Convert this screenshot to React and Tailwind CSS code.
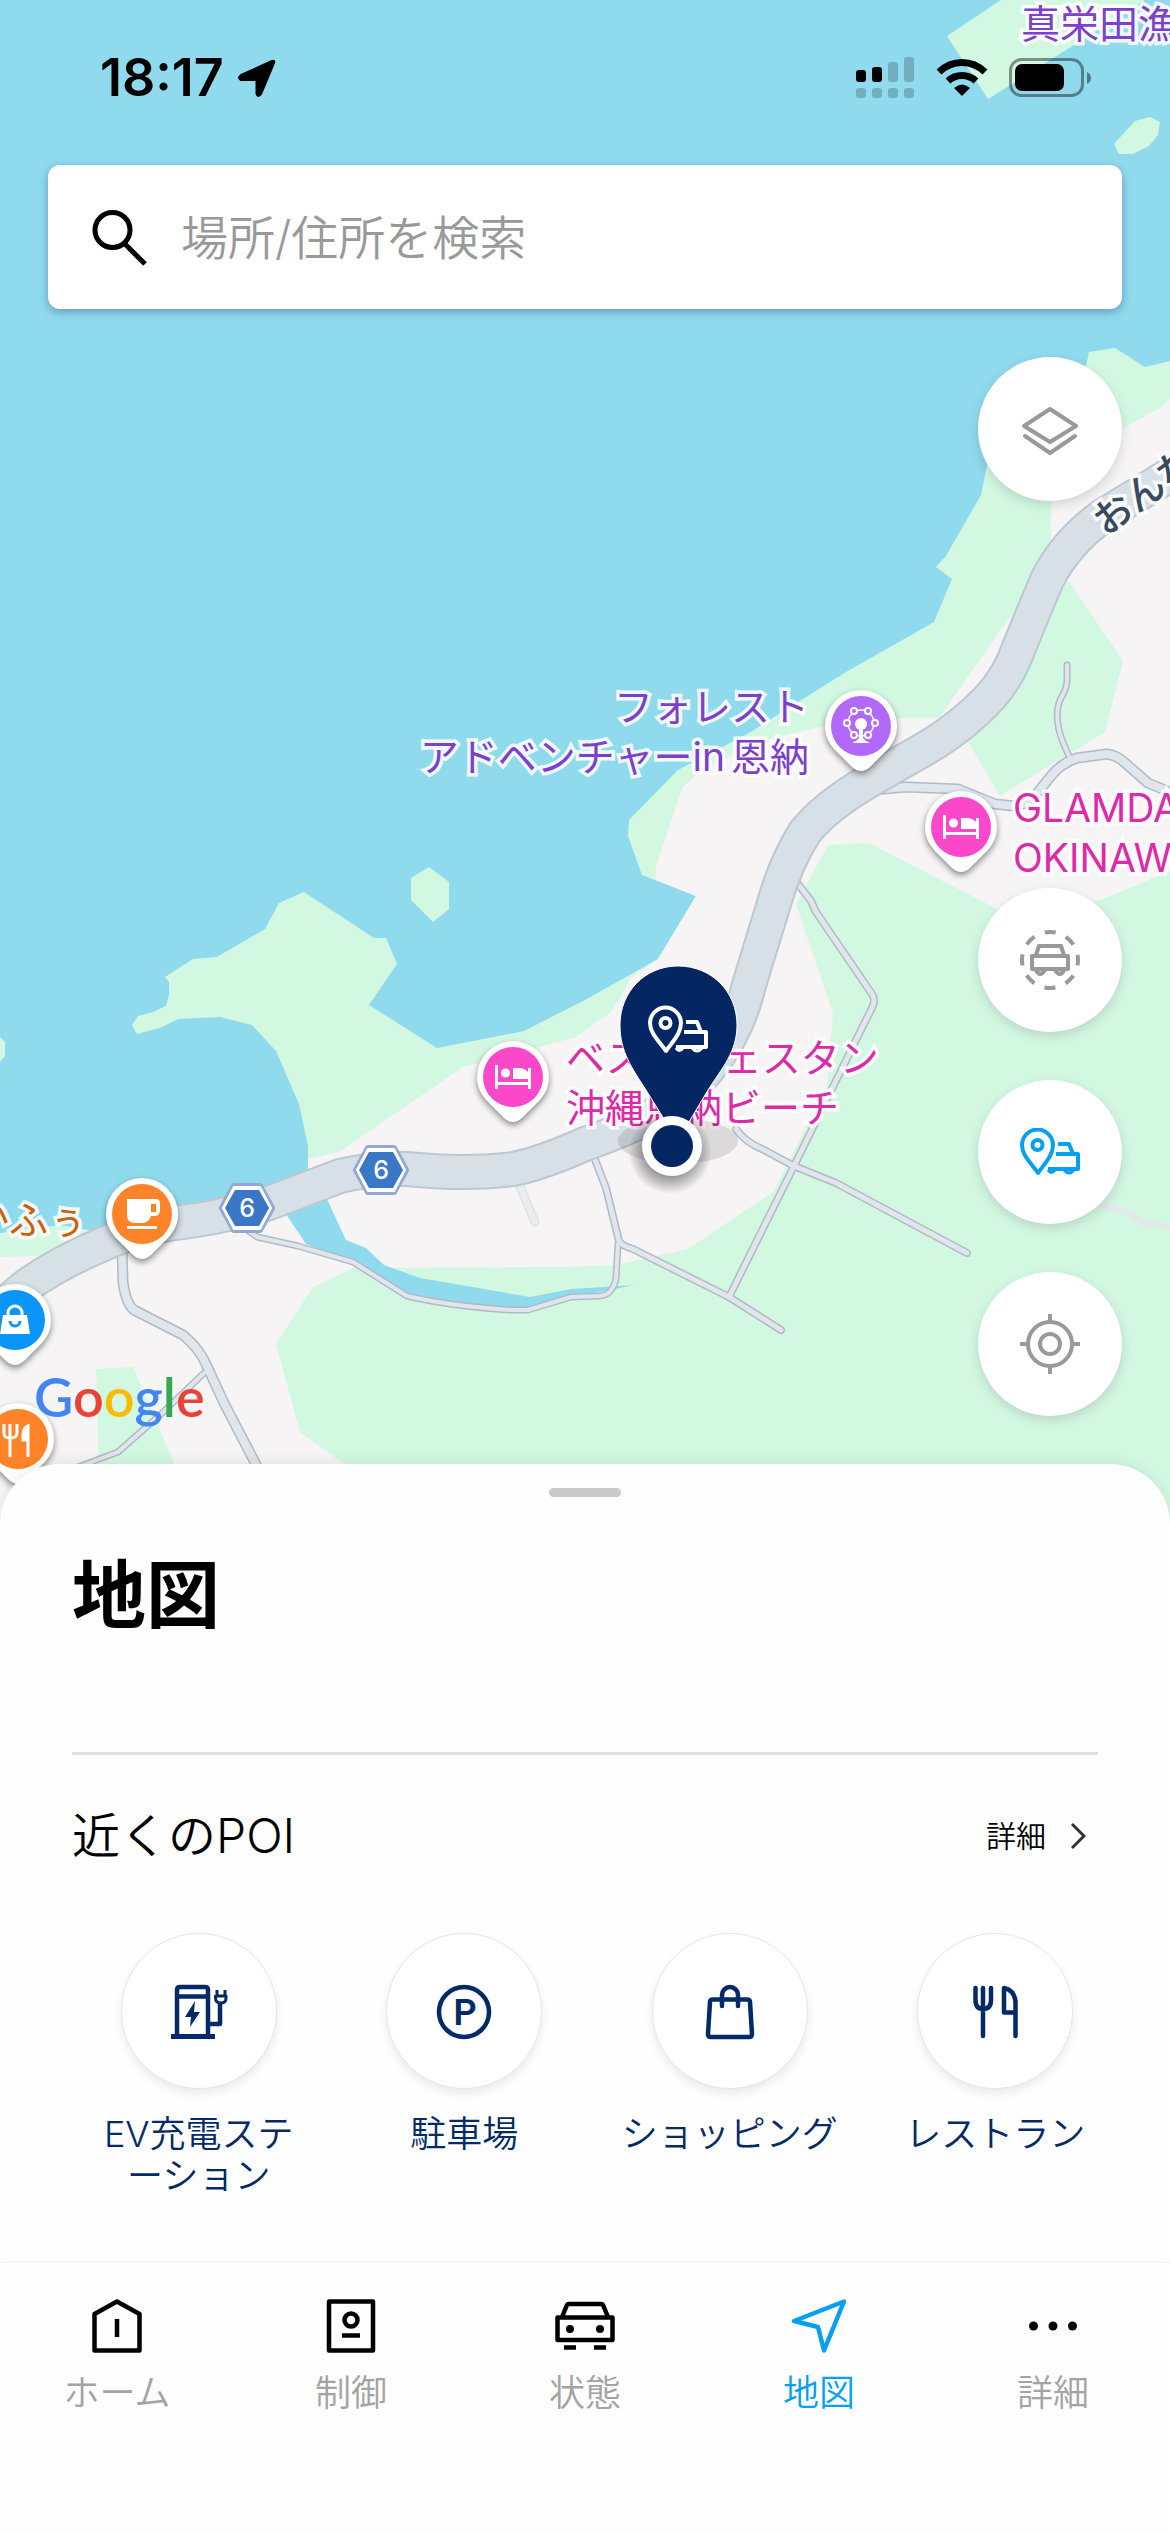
import React from "react";

const NAVY = "#012a66";

/* ---------- map drawing ---------- */

const MAIN_ROAD =
  "M1200 455 L1170 475 L1104 515 Q1066 542 1047 580 Q1030 620 1014 660 Q1002 688 975 712 Q950 735 921 751 L869 781 Q826 806 805 832 Q786 862 775 900 L749 985 Q742 1014 730 1036 Q705 1085 650 1117 Q620 1132 585 1144 Q540 1164 513 1169 Q466 1175 407 1169 Q372 1168 340 1176 L269 1203 Q220 1218 175 1223 Q140 1228 108 1242 Q60 1262 26 1286 L-20 1325";

const SIDE_ROADS = [
  { w: 11, d: "M872 790 L906 787 L958 789 L995 804 L1014 806 Q1030 804 1038 792 L1051 776 Q1060 764 1077 758 L1107 754 Q1116 755 1124 762 L1148 783 L1172 793" },
  { w: 7, d: "M1067 665 V682 Q1066 690 1060 700 Q1055 712 1059 730 Q1062 742 1071 760" },
  { w: 8, d: "M798 884 L811 901 L816 912 L872 994 Q876 1000 872 1008 L859 1034 L794 1166 L729 1297" },
  { w: 8, d: "M736 1129 Q745 1142 762 1149 L794 1166 L836 1183 L967 1253" },
  { w: 8, d: "M594 1157 L606 1188 L619 1241 Q622 1246 633 1249 L729 1297 L781 1330" },
  { w: 7, d: "M618 1244 L616 1279 Q612 1295 600 1296 L571 1297 L528 1310 H511 Q450 1306 407 1296 L353 1262 L298 1246 L257 1237 L243 1227" },
  { w: 11, d: "M122 1248 L123 1282 Q126 1304 134 1310 L183 1335 Q199 1348 206 1364 L224 1403 L262 1476" },
  { w: 7, d: "M204 1373 L160 1415 L118 1452 L70 1470" },
];

function MapDrawing() {
  return (
    <svg className="absolute left-0 top-0" width="1170" height="1560" viewBox="0 0 1170 1560" aria-hidden="true">
      <rect width="1170" height="1560" fill="#90daee" />
      {/* coastal green */}
      <path
        fill="#d3f8e2"
        d="M1170 361 L1145 367 L1115 348 L1089 352 L1086 366 L1010 430 L987 465 L981 495 L946 556 L936 567 L952 579 L934 622 L846 672 L749 733 L678 770 L629 820 L628 836 L642 875 L696 896 L658 959 L585 1000 L524 1031 L437 1048 L369 1005 L397 964 L386 938 H374 L304 892 L279 903 L265 929 L217 957 L193 959 L165 977 L169 982 V995 L166 1006 L153 1012 L138 1016 L132 1025 L137 1034 L160 1028 L178 1019 L220 1017 L252 1025 L276 1051 L299 1104 L308 1146 V1200 L100 1232 L60 1225 L0 1233 V1560 H1170 Z"
      />
      {/* built-up land */}
      <path
        fill="#f6f4f5"
        d="M1170 399 L1160 408 L1126 427 L1052 480 L1050 560 L939 718 H902 L824 726 L753 743 L697 774 L682 788 L656 867 V880 L696 896 L658 959 L630 978 L624 992 L611 1012 L576 1037 L481 1063 L463 1067 L339 1152 L308 1159 V1205 L108 1244 L37 1256 L0 1257 V1560 H1170 Z"
      />
      <path fill="#d3f8e2" d="M1068 580 L1123 661 L1105 732 L1000 796 L967 740 L1020 660 Z" />
      <path
        fill="#d3f8e2"
        d="M828 845 L869 843 L997 909 L1098 901 L1170 871 V1560 H420 L343 1463 L300 1432 L276 1344 L313 1287 L353 1268 L556 1267 L615 1265 L688 1249 L773 1192 L827 1085 L833 1014 L796 904 Z"
      />
      <path fill="#d3f8e2" d="M96 1369 L133 1367 L174 1463 L180 1480 H99 Z" />
      {/* islands */}
      <path fill="#d3f8e2" d="M411 878 L429 867 L449 882 V909 L433 922 L411 900 Z" />
      <path fill="#d3f8e2" d="M0 1037 L5 1042 V1056 L0 1062 Z" />
      <path fill="#d3f8e2" d="M947 36 L1001 0 H1145 L1074 45 L988 99 Z" />
      <path fill="#d3f8e2" d="M1114 144 L1135 121 L1150 117 L1160 122 L1158 135 L1149 146 L1133 154 H1119 Z" />
      {/* river */}
      <path
        fill="#90daee"
        d="M280 1205 L325 1195 L346 1240 L366 1248 L384 1265 L420 1278 L530 1297 L571 1289 L634 1285 L600 1292 L530 1309 H470 L405 1295 L351 1262 L306 1244 Z"
      />
      {/* small tracks */}
      <path d="M519 1184 L535 1222" stroke="#dfe2e4" strokeWidth="9" strokeLinecap="round" />
      <path d="M519 1184 L535 1222" stroke="#eaecee" strokeWidth="6" strokeLinecap="round" />
      <path d="M1100 1206 L1128 1212 L1145 1224 L1156 1223 L1172 1229" stroke="#e4e8e8" strokeWidth="6" fill="none" />
      {/* roads: casing first, then surface */}
      {SIDE_ROADS.map((r) => (
        <path key={r.d} d={r.d} fill="none" stroke="#b1bac4" strokeWidth={r.w} strokeLinecap="round" strokeLinejoin="round" />
      ))}
      {SIDE_ROADS.map((r) => (
        <path key={r.d} d={r.d} fill="none" stroke="#e0e6ec" strokeWidth={r.w - 3} strokeLinecap="round" strokeLinejoin="round" />
      ))}
      <path d={MAIN_ROAD} fill="none" stroke="#bcc8d0" strokeWidth="36" />
      <path d={MAIN_ROAD} fill="none" stroke="#d8e0e7" strokeWidth="32" />
      <RoadShield x={247} y={1208} />
      <RoadShield x={381} y={1170} />
    </svg>
  );
}

function RoadShield({ x, y }) {
  return (
    <g transform={`translate(${x} ${y})`}>
      <path d="M-13 -22 H13 L25 0 L13 22 H-13 L-25 0 Z" fill="#93a8d2" stroke="#93a8d2" strokeWidth="6" strokeLinejoin="round" />
      <path d="M-13 -21 H13 L24 0 L13 21 H-13 L-24 0 Z" fill="#fff" stroke="#fff" strokeWidth="2" strokeLinejoin="round" />
      <path d="M-12 -18 H12 L22 0 L12 18 H-12 L-22 0 Z" fill="#3a78c7" />
      <text y="9" textAnchor="middle" fill="#fff" className="font-['Inter'] text-[25px] font-medium">6</text>
    </g>
  );
}

const PIN_GLYPHS = {
  bed: (
    <g fill="#fff">
      <path d="M-18 -12 h3 V5 H15 V-9 h3 V12 h-3 V8 H-15 V12 h-3 Z" />
      <circle cx="-7.500" cy="-4" r="4.500" />
      <path d="M0 -9 H7 Q14 -8 16 -3 V2 H0 Z" />
    </g>
  ),
  cup: (
    <g fill="#fff">
      <path fillRule="evenodd" d="M-15 -15 H14 Q18 -15 18 -11 V-4 Q18 2 12 2 H9 Q7 9 0 9 H-7 Q-15 9 -15 1 Z M9 -10 V-2 H14 V-10 Z" />
      <rect x="-15" y="12" width="30" height="3" />
    </g>
  ),
  bag: (
    <g>
      <path d="M-12 -5 H12 L15 14 H-15 Z" fill="#fff" />
      <path d="M-7 -4 V-7 a7 7 0 0 1 14 0 V-4" fill="none" stroke="#fff" strokeWidth="3" />
      <path d="M-5 1 a5 5 0 0 0 10 0" fill="none" stroke="#0a95fb" strokeWidth="3" />
    </g>
  ),
  food: (
    <g fill="none" stroke="#fff" strokeWidth="3">
      <path d="M-14 -15 V-6 Q-14 -1 -8 -1 Q-1 -1 -1 -6 V-15 M-8 -15 V18" />
      <path d="M10 18 V-13 Q5 -11 5 -4 V1 H10" fill="#fff" />
    </g>
  ),
  wheel: (
    <g fill="none" stroke="#fff" strokeWidth="2">
      <circle r="13" cy="-3" strokeWidth="1.500" />
      <g fill="#b069fb">
        <circle cx="-7" cy="-15" r="3" />
        <circle cx="7" cy="-15" r="3" />
        <circle cx="-14" cy="-3" r="3" />
        <circle cx="14" cy="-3" r="3" />
        <circle cx="-7" cy="9" r="3" />
        <circle cx="7" cy="9" r="3" />
      </g>
      <circle cy="-2" r="6" fill="#fff" stroke="none" />
      <path d="M-2 0 H2 V12 Q4 15 8 16 V17 H-8 V16 Q-4 15 -2 12 Z" fill="#fff" stroke="none" />
    </g>
  ),
};

function Pin({ className, color, glyph }) {
  return (
    <svg className={"absolute drop-shadow-[0_3px_3px_rgba(0,0,0,0.45)] " + className} width="80" height="90" viewBox="-40 -40 80 90" aria-hidden="true">
      <path fill="#fff" d="M-36 0 A36 36 0 0 1 36 0 C36 11 31 19 25 25 L9 41 Q0 49 -9 41 L-25 25 C-31 19 -36 11 -36 0 Z" />
      <circle r="30" fill={color} />
      {PIN_GLYPHS[glyph]}
    </svg>
  );
}

function ParkedCarGlyph() {
  return (
    <g fill="none" stroke="currentColor" strokeWidth="4" strokeLinejoin="round">
      <path d="M18 45 C10 34 2 27 2 17 A15.500 15.500 0 0 1 33 17 C33 27 26 34 18 45 Z" />
      <circle cx="17.500" cy="17" r="5" />
      <path d="M38 16 H49 L53 26" />
      <path d="M36 26 H58 V41 H28" strokeLinecap="butt" />
      <path d="M28 42 q3 5 7 0 M44 42 q5 6 10 0" strokeWidth="3" />
    </g>
  );
}

function VehicleMarker() {
  return (
    <svg className="absolute left-[600px] top-[950px]" width="160" height="260" viewBox="600 950 160 260" role="img" aria-label="車両の位置">
      <defs>
        <radialGradient id="dotShadow">
          <stop offset="0.500" stopColor="#000" stopOpacity="0.450" />
          <stop offset="1" stopColor="#000" stopOpacity="0" />
        </radialGradient>
      </defs>
      <ellipse cx="678" cy="1141" rx="60" ry="23" fill="#000" fillOpacity="0.110" />
      <circle cx="670" cy="1152" r="42" fill="url(#dotShadow)" />
      <path
        d="M678 966 C712 966 737 992 737 1025 C737 1052 722 1068 708 1090 L686 1127 Q678 1140 669 1127 L646 1090 C632 1068 620 1052 620 1025 C620 992 645 966 678 966 Z"
        fill="#042662"
        stroke="#fff"
        strokeWidth="1"
      />
      <circle cx="672" cy="1146" r="30" fill="#fff" />
      <circle cx="672" cy="1146" r="21" fill="#042662" />
      <g transform="translate(648 1006)" color="#fff">
        <ParkedCarGlyph />
      </g>
    </svg>
  );
}

function MapLabel({ className, children }) {
  return (
    <div className={"absolute whitespace-nowrap text-[39px] leading-[50px] [paint-order:stroke_fill] [-webkit-text-stroke:7px_rgba(255,255,255,0.85)] " + className}>
      {children}
    </div>
  );
}

function MapCanvas() {
  return (
    <div className="absolute inset-x-0 top-0 h-[1560px] overflow-hidden bg-[#90daee]">
      <MapDrawing />
      <MapLabel className="left-[1021px] top-[-1px] text-[#7d3fcc]">真栄田漁</MapLabel>
      <MapLabel className="right-[361px] top-[682px] text-right text-[#7d3fcc]">
        フォレスト
        <br />
        アドベンチャー<span className="mr-[6px]">in</span>恩納
      </MapLabel>
      <MapLabel className="left-[1013px] top-[783px] text-[#dd2aa9]">
        GLAMDA
        <br />
        OKINAW
      </MapLabel>
      <MapLabel className="left-[566px] top-[1033px] text-[#dd2aa9]">
        ベストウェスタン
        <br />
        沖縄恩納ビーチ
      </MapLabel>
      <MapLabel className="left-[-30px] top-[1195px] text-[#cf5f06]">かふぅ</MapLabel>
      <MapLabel className="left-[1086px] top-[466px] -rotate-[36deg] font-medium text-[#3a4a5e]">おんな</MapLabel>
      <Pin className="left-[821px] top-[686px]" color="#b069fb" glyph="wheel" />
      <Pin className="left-[921px] top-[787px]" color="#fb48cb" glyph="bed" />
      <Pin className="left-[473px] top-[1037px]" color="#fb48cb" glyph="bed" />
      <Pin className="left-[102px] top-[1174px]" color="#ff8329" glyph="cup" />
      <Pin className="left-[-25px] top-[1280px]" color="#0a95fb" glyph="bag" />
      <Pin className="left-[-22px] top-[1399px]" color="#ff8329" glyph="food" />
      <VehicleMarker />
      <div className="absolute left-[34px] top-[1363px] font-['Lato'] text-[54px] leading-[68px] font-semibold">
        <span className="text-[#4485f4]">G</span>
        <span className="text-[#e94336]">o</span>
        <span className="text-[#fabb05]">o</span>
        <span className="text-[#4485f4]">g</span>
        <span className="text-[#34a853]">l</span>
        <span className="text-[#e94336]">e</span>
      </div>
    </div>
  );
}

/* ---------- chrome over the map ---------- */

function StatusBar() {
  return (
    <header className="flex h-[165px] items-start justify-between pt-[48px] pr-[78px] pl-[100px]">
      <div className="flex items-center gap-[13px]">
        <span className="font-['Inter'] text-[52px] leading-[60px] font-semibold">18:17</span>
        <svg width="40" height="40" viewBox="0 0 40 40" aria-hidden="true">
          <path d="M4 17 L35 3 Q38 2 37 5 L24 36 Q21 40 19.500 36 V22 H4 Q0 20 4 17 Z" stroke="#000" strokeWidth="2" strokeLinejoin="round" />
        </svg>
      </div>
      <div className="flex h-[60px] items-center">
        <svg width="236" height="44" viewBox="856 56 236 44" aria-hidden="true">
          <rect x="856" y="70" width="10" height="12" rx="3" />
          <rect x="872" y="67" width="10" height="15" rx="3" />
          <g fillOpacity="0.200">
            <rect x="888" y="62" width="10" height="20" rx="3" />
            <rect x="904" y="57" width="10" height="25" rx="3" />
            <rect x="856" y="88" width="10" height="10" rx="3" />
            <rect x="872" y="88" width="10" height="10" rx="3" />
            <rect x="888" y="88" width="10" height="10" rx="3" />
            <rect x="904" y="88" width="10" height="10" rx="3" />
          </g>
          <g fill="none" stroke="#000" strokeWidth="7">
            <path d="M939 72 Q949 62.500 962 62.500 Q975 62.500 985 72" />
            <path d="M948 81 Q954 75.500 962 75.500 Q970 75.500 976 81" />
          </g>
          <path d="M954 88 Q962 81 970 88 L962 96 Z" />
          <rect x="1010.500" y="59.500" width="72" height="36" rx="11" fill="none" stroke="#000" strokeOpacity="0.420" strokeWidth="3" />
          <rect x="1015" y="64" width="49" height="27" rx="7" />
          <path d="M1087 72 Q1091 74 1091 78 Q1091 82 1087 84 Z" fillOpacity="0.450" />
        </svg>
      </div>
    </header>
  );
}

function SearchBar() {
  return (
    <label className="mx-[48px] flex h-[144px] items-center gap-[33px] rounded-[12px] bg-white pl-[43px] shadow-[0_3px_10px_rgba(0,0,60,0.3)]">
      <svg width="57" height="57" viewBox="0 0 57 57" fill="none" stroke="#000" strokeWidth="5" aria-hidden="true">
        <circle cx="21.500" cy="21" r="17.500" />
        <path d="M34 35 L54 55" />
      </svg>
      <input
        type="text"
        aria-label="場所/住所を検索"
        placeholder="場所/住所を検索"
        className="h-full min-w-0 flex-1 bg-transparent text-[47px] font-[350] outline-none placeholder:text-[#999999]"
      />
    </label>
  );
}

function RoundButton({ label, className = "", color = "text-[#999999]", children }) {
  return (
    <button type="button" aria-label={label} className={"flex size-[144px] items-center justify-center rounded-full bg-white shadow-[0_4px_12px_rgba(0,0,0,0.14)] " + color + " " + className}>
      {children}
    </button>
  );
}

function MapControls() {
  return (
    <div className="flex flex-col items-end gap-[48px] px-[48px] pt-[48px] pb-[48px]">
      <RoundButton label="レイヤー" className="mb-[339px]">
        <svg width="60" height="60" viewBox="0 0 60 60" fill="none" stroke="currentColor" strokeWidth="4" strokeLinejoin="round" strokeLinecap="round">
          <path d="M30 10 L56 27 L30 43 L4 27 Z M5 37 L30 54 L55 37" />
        </svg>
      </RoundButton>
      <RoundButton label="車両を表示">
        <svg width="60" height="60" viewBox="-30 -30 60 60" fill="none" stroke="currentColor" strokeWidth="3" strokeLinejoin="round">
          <circle r="28" strokeWidth="4" strokeDasharray="11 10.990" strokeDashoffset="5.500" />
          <path d="M-14 -5 L-11 -14 H11 L14 -5 M-18 -4 H18 V9 H-18 Z M-14 10 q4 8 9 0 M5 10 q5 8 9 0" strokeWidth="4" />
        </svg>
      </RoundButton>
      <RoundButton label="駐車位置" color="text-[#06a0f2]">
        <svg width="60" height="48" viewBox="0 0 60 48">
          <ParkedCarGlyph />
        </svg>
      </RoundButton>
      <RoundButton label="現在地">
        <svg width="60" height="60" viewBox="-30 -30 60 60" fill="none" stroke="currentColor" strokeWidth="4">
          <circle r="22" />
          <circle r="10" />
          <path d="M0 -30 V-22 M0 22 V30 M-30 0 H-22 M22 0 H30" />
        </svg>
      </RoundButton>
    </div>
  );
}

/* ---------- bottom sheet ---------- */

const POIS = [
  {
    label: "EV充電ステーション",
    icon: (
      <g>
        <path d="M8 55 V9 Q8 6 11 6 H36 Q39 6 39 9 V55 M8 15.500 H39" />
        <path d="M2 55.500 H46" strokeWidth="5" />
        <path d="M26 20 L16 36 H22 L21 46 L31 31 H25 Z" fill={NAVY} stroke="none" />
        <path d="M40 43 H51 V22" />
        <path d="M46.500 15 H57 V17 Q57 22 52 22 Q46.500 22 46.500 17 Z M48 14 V9 M56 14 V9" strokeWidth="3" />
      </g>
    ),
  },
  {
    label: "駐車場",
    icon: (
      <g>
        <circle cx="30" cy="31" r="25" />
        <text x="31" y="44" textAnchor="middle" fill={NAVY} stroke="none" className="font-['Roboto'] text-[36px] font-semibold">P</text>
      </g>
    ),
  },
  {
    label: "ショッピング",
    icon: (
      <path d="M13 18.500 H47 Q50 18.500 50 21 L52 53 Q52 56 49 56 H11 Q8 56 8 53 L10 21 Q10 18.500 13 18.500 Z M22 25 V14 a8 8 0 0 1 16 0 V25" strokeLinecap="round" />
    ),
  },
  {
    label: "レストラン",
    icon: (
      <path d="M10.500 7 V19 Q10.500 28 18 28 Q26 28 26 19 V7 M18 7 V55 M50.500 55 V20 Q49 9 39 7 V31.500 H50" strokeLinecap="round" />
    ),
  },
];

function Sheet() {
  return (
    <main className="relative flex flex-1 flex-col rounded-t-[60px] bg-[#fefefe] shadow-[0_-2px_14px_rgba(0,0,0,0.08)]">
      <div className="mx-auto mt-[24px] h-[9px] w-[72px] rounded-full bg-[#cacaca]" />
      <h1 className="mx-[72px] mt-[44px] border-b-[3px] border-[#e0e0e0] pb-[103px] text-[74px] leading-[108px] font-bold">地図</h1>
      <div className="mx-[72px] mt-[45px] flex items-center justify-between pr-[12px]">
        <h2 className="text-[48px] leading-[72px] font-[350]">近くのPOI</h2>
        <a href="#poi" className="flex items-center gap-[24px] text-[30px] leading-[44px] font-[350]">
          詳細
          <svg width="16" height="28" viewBox="0 0 16 28" fill="none" stroke="#333" strokeWidth="3" aria-hidden="true">
            <path d="M2 2 L14 14 L2 26" />
          </svg>
        </a>
      </div>
      <div id="poi" className="mt-[61px] grid grid-cols-4 pr-[42px] pl-[66px]">
        {POIS.map((p) => (
          <button key={p.label} type="button" className="flex flex-col items-center">
            <span className="flex size-[156px] items-center justify-center rounded-full border border-[#e6e6e6] bg-white shadow-[0_5px_10px_rgba(0,0,0,0.08)]">
              <svg width="60" height="60" viewBox="0 0 60 60" fill="none" stroke={NAVY} strokeWidth="4.500" strokeLinejoin="round" aria-hidden="true">
                {p.icon}
              </svg>
            </span>
            <span className="mt-[24px] w-[220px] text-center text-[36px] leading-[42px] font-[350] text-[#012a66] [line-break:anywhere]">{p.label}</span>
          </button>
        ))}
      </div>
    </main>
  );
}

/* ---------- tab bar ---------- */

const TABS = [
  { label: "ホーム", icon: <path d="M7.500 18 L30 5.500 L52.500 18 V54.500 H7.500 Z M30 23 V41" /> },
  {
    label: "制御",
    icon: (
      <g>
        <path d="M8 5.500 H52 V54.500 H8 Z M21 39.500 H39" />
        <circle cx="30" cy="24" r="6.500" />
      </g>
    ),
  },
  {
    label: "状態",
    icon: (
      <g>
        <path d="M2.500 21.500 H57.500 V44 H2.500 Z M7 21 L12 9 Q12.500 8 14 8 H46 Q47.500 8 48 9 L53 21 M9 51.500 H21 M39 51.500 H51" />
        <circle cx="15" cy="33" r="4" fill="currentColor" stroke="none" />
        <circle cx="45" cy="33" r="4" fill="currentColor" stroke="none" />
      </g>
    ),
  },
  { label: "地図", active: true, icon: <path d="M55 5.500 L5 25 L29 31 L35 54.500 Z" /> },
  {
    label: "詳細",
    icon: (
      <g fill="currentColor" stroke="none">
        <circle cx="10.500" cy="30" r="4.500" />
        <circle cx="30" cy="30" r="4.500" />
        <circle cx="49.500" cy="30" r="4.500" />
      </g>
    ),
  },
];

function TabBar() {
  return (
    <nav className="relative grid h-[270px] grid-cols-5 items-start border-t border-[#f5f5f5] bg-[#fefefe] pt-[33px] shadow-[0_-4px_12px_rgba(0,0,0,0.02)]">
      {TABS.map((t) => (
        <a key={t.label} href="#poi" aria-current={t.active ? "page" : undefined} className={"flex flex-col items-center " + (t.active ? "text-[#06a0f2]" : "text-black")}>
          <svg width="60" height="60" viewBox="0 0 60 60" fill="none" stroke="currentColor" strokeWidth="4.500" strokeLinejoin="round" aria-hidden="true">
            {t.icon}
          </svg>
          <span className={"mt-[10px] text-[36px] leading-[54px] font-[350] " + (t.active ? "" : "text-[#a3a3a3]")}>{t.label}</span>
        </a>
      ))}
    </nav>
  );
}

export default function App() {
  return (
    <div className="relative flex min-h-screen flex-col overflow-hidden font-['Inter','Noto_Sans_CJK_JP',sans-serif] text-black">
      <MapCanvas />
      <div className="relative">
        <StatusBar />
        <SearchBar />
        <MapControls />
      </div>
      <Sheet />
      <TabBar />
    </div>
  );
}
